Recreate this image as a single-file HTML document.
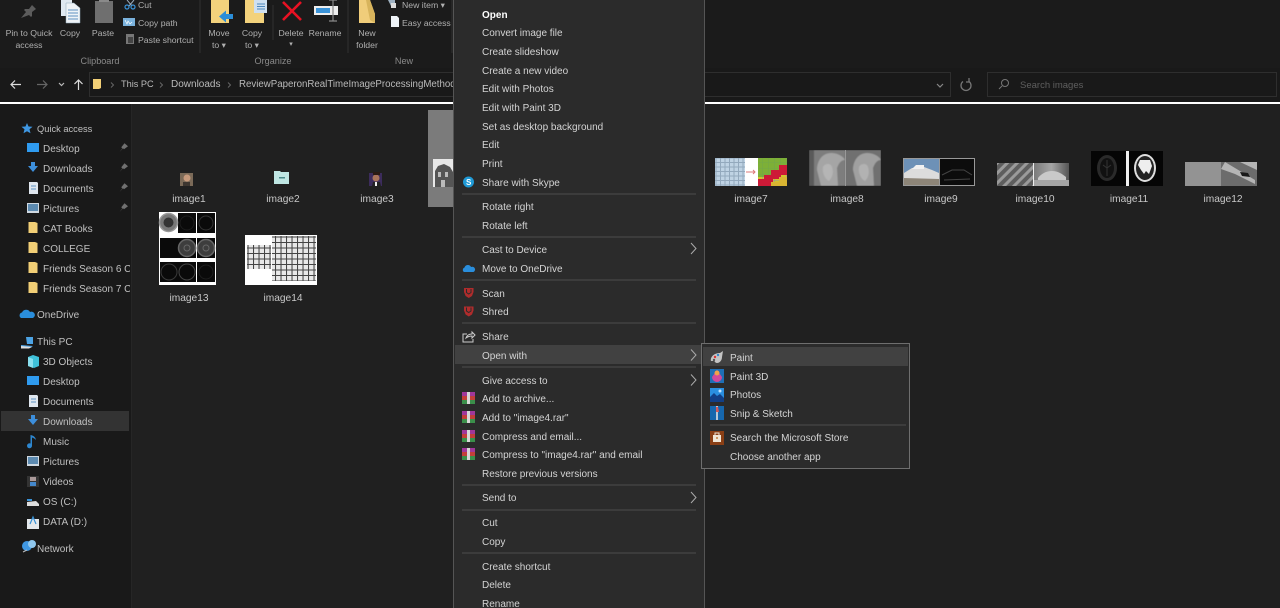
<!DOCTYPE html>
<html><head><meta charset="utf-8"><style>
html,body{margin:0;padding:0;background:#202020}
#p{position:relative;width:1280px;height:608px;overflow:hidden;background:#202020;font-family:"Liberation Sans",sans-serif;font-size:10px;color:#c4c4c4}
.b{position:absolute}
.t{position:absolute;white-space:nowrap;line-height:14px;height:14px;margin-top:2px}
.c{transform:translateX(-50%)}
.r{color:#b0b0b0;font-size:8.7px;margin-top:1px}
.g{color:#8a8a8a;font-size:9.100px;margin-top:1px}
.s{color:#c8c8c8;font-size:10.200px}
.m{color:#d4d4d4;left:482px}
.u{color:#d4d4d4;left:730px}
.l{color:#c0c0c0}
svg{position:absolute;left:0;top:0}
</style></head><body><div id="p">
<div class="b" style="left:0;top:0;width:1280px;height:68px;background:#1b1b1b"></div>
<div class="b" style="left:0;top:68px;width:1280px;height:34px;background:#191919"></div>
<div class="b" style="left:0;top:104px;width:131px;height:504px;background:#191919"></div>
<div class="b" style="left:131px;top:104px;width:1px;height:504px;background:#262626"></div>
<div class="b" style="left:1px;top:411px;width:128px;height:20px;background:#333"></div>
<div class="b" style="left:0;top:102px;width:1280px;height:2px;background:#fff"></div>
<div class="b" style="left:89px;top:72px;width:862px;height:25px;border:1px solid #2e2e2e;box-sizing:border-box;background:#191919"></div>
<div class="b" style="left:987px;top:72px;width:290px;height:25px;border:1px solid #2e2e2e;box-sizing:border-box"></div>
<div class="b" style="left:428px;top:110px;width:25px;height:97px;background:#7b7b7b"></div>

<div class="t r c" style="left:29px;top:25px">Pin to Quick</div>
<div class="t r c" style="left:29px;top:37px">access</div>
<div class="t r c" style="left:70px;top:25px">Copy</div>
<div class="t r c" style="left:103px;top:25px">Paste</div>
<div class="t r" style="left:138px;top:-3px">Cut</div>
<div class="t r" style="left:138px;top:15px">Copy path</div>
<div class="t r" style="left:138px;top:32px">Paste shortcut</div>
<div class="t g c" style="left:100px;top:53px">Clipboard</div>
<div class="t r c" style="left:219px;top:25px">Move</div>
<div class="t r c" style="left:219px;top:37px">to ▾</div>
<div class="t r c" style="left:252px;top:25px">Copy</div>
<div class="t r c" style="left:252px;top:37px">to ▾</div>
<div class="t r c" style="left:291px;top:25px">Delete</div>
<div class="t r c" style="left:291px;top:37px;font-size:7px">▾</div>
<div class="t r c" style="left:325px;top:25px">Rename</div>
<div class="t g c" style="left:273px;top:53px">Organize</div>
<div class="t r c" style="left:367px;top:25px">New</div>
<div class="t r c" style="left:367px;top:37px">folder</div>
<div class="t r" style="left:402px;top:-3px">New item ▾</div>
<div class="t r" style="left:402px;top:15px">Easy access ▾</div>
<div class="t g c" style="left:404px;top:53px">New</div>

<div class="t" style="left:121px;top:75px;color:#bbb;font-size:9.200px">This PC</div>
<div class="t" style="left:171px;top:76px;color:#bbb">Downloads</div>
<div class="t" style="left:239px;top:76px;color:#bbb;width:214px;overflow:hidden;font-size:9.700px">ReviewPaperonRealTimeImageProcessingMethods</div>
<div class="t" style="left:1020px;top:77px;color:#5f5f5f;font-size:9.500px">Search images</div>

<div class="t l" style="left:37px;top:120px;font-size:9.300px">Quick access</div>
<div class="t l" style="left:43px;top:141px">Desktop</div>
<div class="t l" style="left:43px;top:161px">Downloads</div>
<div class="t l" style="left:43px;top:181px">Documents</div>
<div class="t l" style="left:43px;top:201px">Pictures</div>
<div class="t l" style="left:43px;top:221px">CAT Books</div>
<div class="t l" style="left:43px;top:241px">COLLEGE</div>
<div class="t l" style="left:43px;top:261px;width:87px;overflow:hidden">Friends Season 6 Complete</div>
<div class="t l" style="left:43px;top:281px;width:87px;overflow:hidden">Friends Season 7 Complete</div>
<div class="t l" style="left:37px;top:307px">OneDrive</div>
<div class="t l" style="left:37px;top:334px">This PC</div>
<div class="t l" style="left:43px;top:354px">3D Objects</div>
<div class="t l" style="left:43px;top:374px">Desktop</div>
<div class="t l" style="left:43px;top:394px">Documents</div>
<div class="t l" style="left:43px;top:414px">Downloads</div>
<div class="t l" style="left:43px;top:434px">Music</div>
<div class="t l" style="left:43px;top:454px">Pictures</div>
<div class="t l" style="left:43px;top:474px">Videos</div>
<div class="t l" style="left:43px;top:494px">OS (C:)</div>
<div class="t l" style="left:43px;top:514px">DATA (D:)</div>
<div class="t l" style="left:37px;top:541px">Network</div>

<div class="t s c" style="left:189px;top:191px">image1</div>
<div class="t s c" style="left:283px;top:191px">image2</div>
<div class="t s c" style="left:377px;top:191px">image3</div>
<div class="t s c" style="left:751px;top:191px">image7</div>
<div class="t s c" style="left:847px;top:191px">image8</div>
<div class="t s c" style="left:941px;top:191px">image9</div>
<div class="t s c" style="left:1035px;top:191px">image10</div>
<div class="t s c" style="left:1129px;top:191px">image11</div>
<div class="t s c" style="left:1223px;top:191px">image12</div>
<div class="t s c" style="left:189px;top:290px">image13</div>
<div class="t s c" style="left:283px;top:290px">image14</div>

<svg width="1280" height="608" viewBox="0 0 1280 608">
<defs>
<pattern id="gr" width="5.500" height="5.500" patternUnits="userSpaceOnUse"><rect width="5.500" height="5.500" fill="#e8e8e8"/><path d="M0 .5H5.500M.5 0V5.500" stroke="#444" stroke-width="1.100"/></pattern>
<pattern id="bl" width="4.500" height="4.500" patternUnits="userSpaceOnUse"><rect width="4.500" height="4.500" fill="#bfd3e4"/><path d="M0 .5H4.500M.5 0V4.500" stroke="#93a9bd" stroke-width="1"/></pattern>
<pattern id="st" width="7" height="7" patternUnits="userSpaceOnUse" patternTransform="rotate(-45)"><rect width="7" height="7" fill="#5e5e5e"/><rect width="7" height="3" fill="#9a9a9a"/></pattern>
<pattern id="ye" width="6" height="6" patternUnits="userSpaceOnUse"><rect width="6" height="6" fill="#d3c52c"/><path d="M0 .5H6M.5 0V6" stroke="#999" stroke-width=".6"/></pattern>
<linearGradient id="cg" x1="0" x2="1"><stop offset="0" stop-color="#7a7a7a"/><stop offset=".5" stop-color="#a5a5a5"/><stop offset="1" stop-color="#555"/></linearGradient>
<filter id="bf" x="0" y="0" width="1" height="1"><feGaussianBlur stdDeviation=".5"/></filter>
</defs>
<!-- ribbon dividers -->
<path d="M200 0V53M273 5V40M348 0V53M452 0V53" stroke="#303030"/>
<!-- pin -->
<path d="M21 18l5-6-2-2 1-1 4 0 3-4 4 4-4 3 0 4-1 1-2-2z" fill="#5c5c5c"/>
<!-- copy -->
<path d="M61 0h11v16h-11z" fill="#dfe8f0"/><path d="M66 3h8l6 5v15h-14z" fill="#eef3f7" stroke="#8fa6b8" stroke-width=".5"/><path d="M68 10h10M68 13h10M68 16h10M68 19h10" stroke="#5f92c0"/>
<!-- paste -->
<rect x="95" y="1" width="18" height="22" fill="#6f6f6f"/><rect x="99" y="-1" width="10" height="3" fill="#8a8a8a"/>
<!-- cut etc -->
<path d="M127 0l5 6M134 0l-5 6" stroke="#9ab" /><circle cx="127" cy="7" r="2" fill="none" stroke="#3a93d8" stroke-width="1.200"/><circle cx="133" cy="7" r="2" fill="none" stroke="#3a93d8" stroke-width="1.200"/>
<rect x="123" y="18" width="12" height="8" fill="#7ab2dd"/><path d="M125 20l2 4 1-3 2 3 2-2" stroke="#fff" fill="none" stroke-width=".7"/>
<rect x="126" y="34" width="8" height="10" fill="#777"/><rect x="128" y="37" width="5" height="6" fill="#444"/>
<!-- move to -->
<path d="M211 0h18v23h-18z" fill="#f3d27c"/><path d="M219 16.500l7-6v3.500h7v5h-7v3.500z" fill="#2b8ed8"/>
<!-- copy to -->
<path d="M245 0h19v23h-19z" fill="#f3d27c"/><rect x="254" y="0" width="13" height="13" fill="#cfe0f0"/><path d="M257 4h8M257 6.500h8M257 9h8" stroke="#4d88bd"/>
<!-- delete -->
<path d="M283 2l18 18M301 2l-18 18" stroke="#e81123" stroke-width="2.600"/>
<!-- rename -->
<rect x="314" y="6" width="24" height="9" fill="#eee"/><rect x="316" y="8" width="14" height="5" fill="#3a93d8"/><path d="M333 0v21M329 0h8M329 21h8" stroke="#888" stroke-width="1.200"/>
<!-- new folder -->
<path d="M359 0h11l5 14v9h-16z" fill="#f0cd7a"/><path d="M366 0h4l5 14v9l-5-3z" fill="#d8b45c"/>
<path d="M388 0h7v6h-4z" fill="#9fb2c2"/><rect x="391" y="3" width="5" height="5" fill="#ddd"/>
<path d="M391 16h6l2 2v9h-8z" fill="#eef3f7"/>
<!-- nav -->
<path d="M11 84.500h10M15 80.500l-4 4 4 4" fill="none" stroke="#ddd" stroke-width="1.200"/>
<path d="M37 84.500h10M43 80.500l4 4-4 4" fill="none" stroke="#666" stroke-width="1.200"/>
<path d="M59 83l2.500 2.500L64 83" fill="none" stroke="#bbb" stroke-width="1.200"/>
<path d="M78.500 90V80M74.500 84l4-4 4 4" fill="none" stroke="#ddd" stroke-width="1.200"/>
<path d="M93 79h8v9l-2 1h-6z" fill="#f2cf76"/>
<path d="M111 82.500l2.500 2.500-2.500 2.500M160 82.500l2.500 2.500-2.500 2.500M228 82.500l2.500 2.500-2.500 2.500" fill="none" stroke="#666"/>
<path d="M937 84l3 3 3-3" fill="none" stroke="#888" stroke-width="1.200"/>
<path d="M963 81.500a5 5 0 1 0 6 0M969 78v4h-3" fill="none" stroke="#777" stroke-width="1.300"/>
<circle cx="1005" cy="83" r="3.500" fill="none" stroke="#777"/><path d="M1002 86l-3 3" stroke="#777"/>
<!-- sidebar icons -->
<path d="M27 123l1.500 3.500 4 .3-3 2.500 1 4-3.500-2-3.500 2 1-4-3-2.500 4-.3z" fill="#3f97e2"/>
<g fill="#707070"><path d="M119.500 152l2.800-3.500-1-1.200 3.200-4 3.500 3-4 3-1-1z"/><path d="M119.500 172l2.800-3.500-1-1.200 3.200-4 3.500 3-4 3-1-1z"/><path d="M119.500 192l2.800-3.500-1-1.200 3.200-4 3.500 3-4 3-1-1z"/><path d="M119.500 212l2.800-3.500-1-1.200 3.200-4 3.500 3-4 3-1-1z"/></g>
<rect x="27" y="143" width="12" height="9" fill="#2f9bef"/><rect x="27" y="376" width="12" height="9" fill="#2f9bef"/>
<path d="M31 162h4v4h3l-5 6-5-6h3z" fill="#3d8fdc"/><path d="M31 415h4v4h3l-5 6-5-6h3z" fill="#3d8fdc"/>
<path d="M29 182h8l1 1v11h-9z" fill="#dfe6ee"/><path d="M31 186h5M31 189h5" stroke="#5d93c3"/>
<path d="M29 395h8l1 1v11h-9z" fill="#dfe6ee"/><path d="M31 399h5M31 402h5" stroke="#5d93c3"/>
<rect x="27" y="203" width="12" height="10" fill="#cfd8e0"/><rect x="28" y="204" width="10" height="7" fill="#5c8ab0"/>
<rect x="27" y="456" width="12" height="10" fill="#cfd8e0"/><rect x="28" y="457" width="10" height="7" fill="#5c8ab0"/>
<path d="M28.500 222h6.500l2.500 1v10h-9z" fill="#f2cf76"/><path d="M28.500 242h6.500l2.500 1v10h-9z" fill="#f2cf76"/><path d="M28.500 262h6.500l2.500 1v10h-9z" fill="#f2cf76"/><path d="M28.500 282h6.500l2.500 1v10h-9z" fill="#f2cf76"/>
<path d="M21 318a3 3 0 0 1 1-5.500 4.500 4.500 0 0 1 8-.5 3 3 0 0 1 3 6z" fill="#2a8edc"/>
<path d="M26 337h7v7h-6zM21 345l12 1-3 2h-9z" fill="#4ca3e4"/><path d="M21 346l11 1-3 1.500h-8z" fill="#ddd"/>
<path d="M28 357l5-2 6 2v9l-5 2-6-2z" fill="#3fc1d9"/><path d="M28 357l5 2v9l-5-2z" fill="#8adfee"/>
<path d="M32 436v10a2.500 2.500 0 1 1-1.500-2.500V435c3 .5 5 2 5.500 5-1.500-1.500-2.500-2-4-2.500z" fill="#2d87d0"/>
<rect x="27" y="476" width="12" height="11" fill="#333"/><rect x="30" y="477" width="6" height="4" fill="#a99"/><rect x="30" y="482" width="6" height="4" fill="#48c"/>
<path d="M27 499h5v2h-5z" fill="#3a93d8"/><path d="M27 502l9-1 3 3v2H27z" fill="#ddd"/>
<rect x="27" y="519" width="12" height="10" fill="#e4e8ec"/><path d="M30 524l3-7 3 7" fill="none" stroke="#3a93d8" stroke-width="1.200"/>
<circle cx="27" cy="546" r="5" fill="#3f97e2"/><circle cx="32" cy="544" r="4" fill="#8fc7ee"/><path d="M23 552l4-2" stroke="#bbb"/>
<!-- thumbnails -->
<rect x="180" y="173" width="13" height="13" fill="#7b6a58"/><circle cx="187" cy="178" r="3.500" fill="#c79a7c"/><rect x="183" y="182" width="7" height="4" fill="#3d3630"/>
<path d="M274 171h6l1 1h8v12h-15z" fill="#bfe6e3"/><rect x="279" y="177" width="6" height="1.500" fill="#4a8a8a"/>
<rect x="369" y="173" width="13" height="13" fill="#3c2c5c"/><circle cx="376" cy="178" r="3.500" fill="#a9745a"/><path d="M372 186l1-4h7l1 4z" fill="#222"/><rect x="375" y="182" width="2" height="4" fill="#eee"/><rect x="373" y="172" width="7" height="3" fill="#2a1a14"/>
<rect x="433" y="159" width="20" height="28" fill="#e8e8e8"/><path d="M435 187v-16l3-5 6-2 6 3 3 5v15z" fill="#555"/><path d="M438 172h3v5h-3zM445 172h3v5h-3zM441 180h4v7h-4z" fill="#bbb"/>
<rect x="715" y="158" width="72" height="28" fill="#fff"/><rect x="715" y="158" width="30" height="28" fill="url(#bl)"/><path d="M746 172h9m-2-2l2 2-2 2" stroke="#d77" fill="none"/>
<rect x="758" y="158" width="29" height="28" fill="url(#ye)"/><path d="M758 158h29v7h-8v6h-8v6h-13z" fill="#6dab3a" opacity=".85"/><path d="M758 186v-7h6v-4h7v-5h8v-5h8v10h-6v4h-8v7z" fill="#cd1a37"/><path d="M771 186v-4h8v-5h8v9z" fill="#d9b532"/>
<g filter="url(#bf)"><rect x="809" y="150" width="72" height="36" fill="#8a8a8a"/><path d="M809 150h36v36h-36z" fill="#7d7d7d"/><path d="M817 170c0-10 6-17 14-17 6 0 12 3 14 7-4 0-6 3-8 8l1 18h-17z" fill="#a5a5a5"/><path d="M823 167c2-4 8-4 9 0 2 6 0 11-3 14-4-2-7-8-6-14z" fill="#b5b5b5"/><path d="M845 150h36v36h-36z" fill="#6f6f6f"/><path d="M853 170c0-10 6-17 14-17 6 0 12 3 14 7-4 0-6 3-8 8l1 18h-17z" fill="#a0a0a0"/><path d="M859 167c2-4 8-4 9 0 2 6 0 11-3 14-4-2-7-8-6-14z" fill="#b2b2b2"/><rect x="809" y="150" width="5" height="36" fill="#5a5a5a"/></g><rect x="845" y="150" width="1" height="36" fill="#999"/>
<rect x="903" y="158" width="72" height="28" fill="#999"/><rect x="904" y="159" width="35" height="26" fill="#6d91b7"/><path d="M904 173l8-5 12-1 8 3 7 3v12h-35z" fill="#dcdcdc"/><path d="M904 178l35 1v6h-35z" fill="#8d8578"/><path d="M912 169h12v-4h-8z" fill="#f1f1f1"/><rect x="940" y="159" width="34" height="26" fill="#0c0c0c"/><path d="M942 175l10-5 12 0 8 5M944 180l26-1" stroke="#444" fill="none"/>
<rect x="997" y="163" width="36" height="23" fill="url(#st)"/><rect x="1033" y="163" width="1" height="23" fill="#eee"/><rect x="1034" y="163" width="35" height="23" fill="url(#cg)"/><path d="M1034 180h35v6h-35z" fill="#a5a5a5"/><path d="M1038 178c3-4 8-7 14-7 6 0 10 3 14 6v3h-28z" fill="#c9c9c9"/>
<rect x="1091" y="151" width="72" height="35" fill="#050505"/><rect x="1126" y="151" width="3" height="35" fill="#f0f0f0"/><ellipse cx="1107" cy="168" rx="10" ry="13" fill="#2a2a2a"/><ellipse cx="1107" cy="168" rx="7" ry="10" fill="#111"/><path d="M1107 160v16M1103 165l4 3 4-3" stroke="#333" fill="none"/><ellipse cx="1145" cy="168" rx="11" ry="14" fill="#ddd"/><ellipse cx="1145" cy="168" rx="9" ry="12" fill="#222"/><path d="M1140 160h10l2 6-3 8-3-3-2 3-3-4-3-5z" fill="#eee"/>
<rect x="1185" y="162" width="72" height="24" fill="#8a8a8a"/><path d="M1185 162h36v24h-36z" fill="#939393"/><path d="M1221 162h36v24h-36z" fill="#6c6c6c"/><path d="M1225 162l30 18v4l-20-10-14-5zM1240 162h17v8z" fill="#b5b5b5"/><path d="M1240 172l8 1 2 4-8-1z" fill="#1a1a1a"/>
<rect x="159" y="212" width="57" height="73" fill="#fff"/>
<g fill="#0a0a0a"><rect x="178" y="213" width="18" height="20"/><rect x="197" y="213" width="18" height="20"/><rect x="160" y="238" width="18" height="20"/><rect x="178" y="238" width="18" height="20"/><rect x="197" y="238" width="18" height="20"/><rect x="160" y="262" width="18" height="20"/><rect x="178" y="262" width="18" height="20"/><rect x="197" y="262" width="18" height="20"/></g>
<circle cx="168.500" cy="222.500" r="9" fill="#777" stroke="#999" stroke-width="1.500"/><circle cx="168.500" cy="222.500" r="5" fill="#333"/>
<g fill="none"><circle cx="187" cy="223" r="7" stroke="#1c1c1c"/><circle cx="206" cy="223" r="7" stroke="#333"/><circle cx="187" cy="248" r="8.500" fill="#3d3d3d" stroke="#666" stroke-width="1.500"/><circle cx="206" cy="248" r="8.500" fill="#3d3d3d" stroke="#666" stroke-width="1.500"/><circle cx="187" cy="248" r="3" stroke="#666"/><circle cx="206" cy="248" r="3" stroke="#666"/><circle cx="169" cy="272" r="8" stroke="#3a3a3a"/><circle cx="187" cy="272" r="8" stroke="#444"/><circle cx="206" cy="272" r="7" stroke="#1e1e1e"/></g>
<rect x="245" y="235" width="72" height="50" fill="#fff"/><rect x="272" y="236" width="44" height="45" fill="url(#gr)"/><rect x="247" y="245" width="24" height="24" fill="url(#gr)"/>
<!-- menu -->
<rect x="453.500" y="-1" width="251" height="620" fill="#2b2b2b" stroke="#555"/>
<rect x="455" y="345" width="248" height="19" fill="#414141"/>
<path d="M462 194h234M462 237h234M462 280h234M462 323h234M462 367h234M462 485h234M462 510h234M462 553h234" stroke="#4e4e4e"/>
<path d="M691 243l5 5.500-5 5.500M691 349.500l5 5.500-5 5.500M691 374.500l5 5.500-5 5.500M691 492l5 5.500-5 5.500" fill="none" stroke="#aaa"/>
<circle cx="468.500" cy="182" r="5.500" fill="#1f9ad6"/><text x="466" y="185" font-size="8" font-weight="bold" fill="#fff" font-family="Liberation Sans">S</text>
<path d="M464 272a2.500 2.500 0 0 1 .5-4.500 3.500 3.500 0 0 1 6.500-.5 2.500 2.500 0 0 1 2.500 5z" fill="#2a8edc"/>
<path d="M464 288h9.500v4l-1.500 4-3.200 2-3.200-2-1.600-4z" fill="#b02c2c"/><path d="M466.500 289v3.500l2.200 1.500 2.300-1.500V289" fill="none" stroke="#2b2b2b"/>
<path d="M464 306.500h9.500v4l-1.500 4-3.200 2-3.200-2-1.600-4z" fill="#b02c2c"/><path d="M466.500 307.500v3.500l2.200 1.500 2.300-1.500v-3.500" fill="none" stroke="#2b2b2b"/>
<path d="M467 334h-4v8h10v-3M466 338c1-3 3-4 6-4v-2l3 3-3 3v-2c-2 0-4 .5-6 2z" fill="none" stroke="#ccc"/>
<rect x="462" y="392" width="13" height="4" fill="#a0379a"/><rect x="462" y="396" width="13" height="4" fill="#c33f3a"/><rect x="462" y="400" width="13" height="4" fill="#3b8f4a"/><rect x="467" y="392" width="3" height="12" fill="#d8d8d8"/>
<rect x="462" y="411" width="13" height="4" fill="#a0379a"/><rect x="462" y="415" width="13" height="4" fill="#c33f3a"/><rect x="462" y="419" width="13" height="4" fill="#3b8f4a"/><rect x="467" y="411" width="3" height="12" fill="#d8d8d8"/>
<rect x="462" y="430" width="13" height="4" fill="#a0379a"/><rect x="462" y="434" width="13" height="4" fill="#c33f3a"/><rect x="462" y="438" width="13" height="4" fill="#3b8f4a"/><rect x="467" y="430" width="3" height="12" fill="#d8d8d8"/>
<rect x="462" y="448" width="13" height="4" fill="#a0379a"/><rect x="462" y="452" width="13" height="4" fill="#c33f3a"/><rect x="462" y="456" width="13" height="4" fill="#3b8f4a"/><rect x="467" y="448" width="3" height="12" fill="#d8d8d8"/>
<!-- submenu -->
<rect x="701.500" y="343.500" width="208" height="125" fill="#2b2b2b" stroke="#6e6e6e"/>
<rect x="703" y="347" width="205" height="19" fill="#414141"/>
<path d="M710 425h196" stroke="#4e4e4e"/>
<path d="M711 361c-1-4 3-8 9-8l3-2-1 6c0 3-2 6-5 6-2 0-2-2-3-2z" fill="#c4c4c4"/><circle cx="715" cy="357" r="1.200" fill="#d33"/><circle cx="718" cy="355" r="1.200" fill="#38c"/><circle cx="714" cy="360" r="1.200" fill="#555"/>
<rect x="710" y="369" width="14" height="14" fill="#1f6fb5"/><path d="M717 370l5 7a5 5 0 0 1-10 0z" fill="#d04a9c"/><circle cx="717" cy="373" r="2.500" fill="#f1a14a"/>
<rect x="710" y="388" width="14" height="14" fill="#2a8fe0"/><path d="M710 402v-5l4-4 3 3 3-2 4 4v4z" fill="#123f86"/><circle cx="720" cy="391" r="1.500" fill="#bfe3ff"/>
<rect x="710" y="406" width="14" height="14" fill="#1667ae"/><path d="M716 406h2v14h-2z" fill="#b9c8d8"/><path d="M716 407h2l1 5h-3z" fill="#d25a5a"/>
<rect x="710" y="431" width="14" height="14" fill="#8a3f15"/><path d="M713 435h8v7h-8z" fill="#f0e6d6"/><path d="M715 435v-2h4v2" fill="none" stroke="#f0e6d6"/><rect x="716" y="437" width="2" height="2" fill="#c96"/>
</svg>

<div class="t m" style="top:7px;color:#fff;font-weight:bold">Open</div>
<div class="t m" style="top:25px">Convert image file</div>
<div class="t m" style="top:44px">Create slideshow</div>
<div class="t m" style="top:63px">Create a new video</div>
<div class="t m" style="top:81px">Edit with Photos</div>
<div class="t m" style="top:100px">Edit with Paint 3D</div>
<div class="t m" style="top:119px">Set as desktop background</div>
<div class="t m" style="top:137px">Edit</div>
<div class="t m" style="top:156px">Print</div>
<div class="t m" style="top:175px">Share with Skype</div>
<div class="t m" style="top:199px">Rotate right</div>
<div class="t m" style="top:218px">Rotate left</div>
<div class="t m" style="top:242px">Cast to Device</div>
<div class="t m" style="top:261px">Move to OneDrive</div>
<div class="t m" style="top:286px">Scan</div>
<div class="t m" style="top:304px">Shred</div>
<div class="t m" style="top:329px">Share</div>
<div class="t m" style="top:348px">Open with</div>
<div class="t m" style="top:373px">Give access to</div>
<div class="t m" style="top:391px">Add to archive...</div>
<div class="t m" style="top:410px">Add to "image4.rar"</div>
<div class="t m" style="top:429px">Compress and email...</div>
<div class="t m" style="top:447px">Compress to "image4.rar" and email</div>
<div class="t m" style="top:466px">Restore previous versions</div>
<div class="t m" style="top:490px">Send to</div>
<div class="t m" style="top:515px">Cut</div>
<div class="t m" style="top:534px">Copy</div>
<div class="t m" style="top:559px">Create shortcut</div>
<div class="t m" style="top:577px">Delete</div>
<div class="t m" style="top:596px">Rename</div>

<div class="t u" style="top:350px">Paint</div>
<div class="t u" style="top:369px">Paint 3D</div>
<div class="t u" style="top:387px">Photos</div>
<div class="t u" style="top:406px">Snip &amp; Sketch</div>
<div class="t u" style="top:430px">Search the Microsoft Store</div>
<div class="t u" style="top:449px">Choose another app</div>
</div></body></html>
